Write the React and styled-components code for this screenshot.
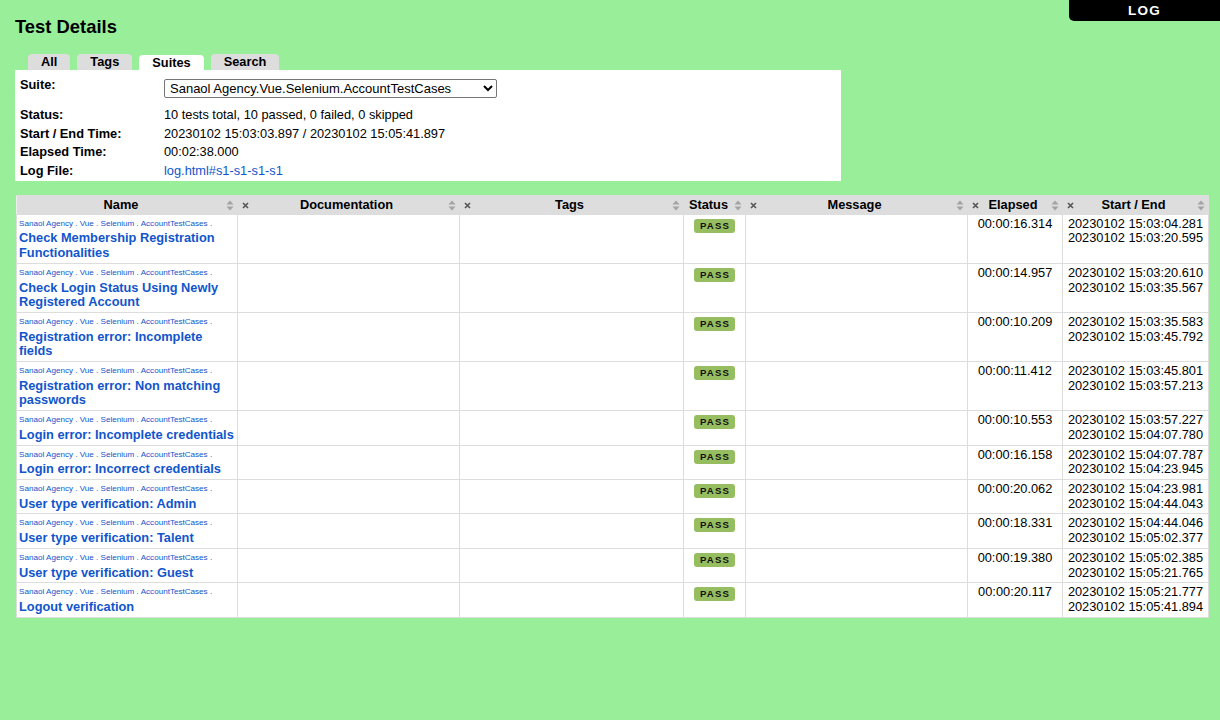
import React from "react";
import styled, { createGlobalStyle } from "styled-components";

const GlobalStyle = createGlobalStyle`
  body {
    margin: 0;
    background: #99ee99;
    font-family: "Liberation Sans", Arial, sans-serif;
    font-size: 12.8px;
    color: #000;
  }
`;

const Page = styled.div`
  position: relative;
  padding: 0 15px 40px;
  min-height: 680px;
`;

const LogLink = styled.a`
  position: absolute;
  top: 0;
  right: 0;
  width: 151px;
  height: 21px;
  line-height: 21px;
  background: #000;
  color: #fff;
  font-weight: bold;
  font-size: 13.5px;
  letter-spacing: 1.3px;
  text-align: center;
  text-decoration: none;
  border-bottom-left-radius: 5px;
`;

const Heading = styled.h1`
  margin: 0;
  padding-top: 16px;
  font-size: 18.4px;
  font-weight: bold;
  line-height: 21px;
`;

const Tabs = styled.ul`
  display: flex;
  gap: 7px;
  list-style: none;
  margin: 17px 0 0 13px;
  padding: 0;
`;

const Tab = styled.li`
  height: 16px;
  line-height: 16px;
  padding: 0 13px;
  margin-top: ${(p) => (p.$active ? "1px" : "0")};
  background: ${(p) => (p.$active ? "#fff" : "#ddd")};
  border-radius: 4px 4px 0 0;
  font-weight: bold;
  position: relative;
  z-index: 1;
`;

const DetailsBox = styled.div`
  width: 826px;
  box-sizing: border-box;
  background: #fff;
  padding: 4px 5px 1px;
  margin-top: ${(p) => p.$offset || 0};
`;

const DetailRow = styled.div`
  display: flex;
  align-items: flex-start;
  height: ${(p) => p.$height || "18.7px"};
  line-height: 15px;
`;

const Label = styled.div`
  width: 144px;
  flex: none;
  font-weight: bold;
  padding-top: ${(p) => p.$top || "2px"};
`;

const Value = styled.div`
  padding-top: 2px;
`;

const SuiteSelect = styled.select`
  margin-top: 5px;
  width: 333px;
  height: 19px;
  font-family: "Liberation Sans", Arial, sans-serif;
  font-size: 13px;
  padding: 0 1px;
  border: 1px solid #767676;
  border-radius: 2px;
  background: #fff;
  color: #000;
`;

const Link = styled.a`
  color: #15c;
  text-decoration: none;
`;

const Table = styled.table`
  margin: 14px 0 0 1px;
  width: 1192px;
  table-layout: fixed;
  border-collapse: collapse;
  background: #fff;
  font-size: 12.8px;
`;

const Th = styled.th`
  position: relative;
  height: 19px;
  box-sizing: border-box;
  background: #ddd;
  border: 1px solid #ddd;
  border-left-color: #eee;
  padding: ${(p) => (p.$hide ? "0 16px 0 12px" : "0 14px 0 2px")};
  font-weight: bold;
  text-align: center;
  white-space: nowrap;
`;

const Td = styled.td`
  border: 1px solid #ddd;
  padding: 2px 2px;
  vertical-align: top;
  line-height: 14.7px;
  text-align: ${(p) => p.$align || "left"};
`;

const ParentName = styled.span`
  display: block;
  color: #15c;
  font-size: 8.1px;
  line-height: 14.7px;
`;

const TestName = styled.a`
  display: block;
  color: #15c;
  font-weight: bold;
  text-decoration: none;
`;

const PassLabel = styled.span`
  display: inline-block;
  margin-top: 2px;
  padding: 2px 5px 2px 6px;
  background: #97bd61;
  border-radius: 3px;
  font-size: 9.6px;
  font-weight: bold;
  line-height: 10px;
  letter-spacing: 1.2px;
  color: #111;
`;

const SortIcon = styled.svg`
  position: absolute;
  right: 3px;
  top: 4px;
`;

const HideIcon = styled.svg`
  position: absolute;
  left: 4px;
  top: 6px;
`;

const Sort = () => (
  <SortIcon width="8" height="11" viewBox="0 0 8 11">
    <path d="M4 0.5 L7.5 4.5 H0.5 Z" fill="#a3a3a3" />
    <path d="M4 10.5 L7.5 6.5 H0.5 Z" fill="#a3a3a3" />
  </SortIcon>
);

const Hide = () => (
  <HideIcon width="7" height="7" viewBox="0 0 7 7">
    <path d="M1 1 L6 6 M6 1 L1 6" stroke="#555" strokeWidth="1.6" />
  </HideIcon>
);

const columns = [
  { title: "Name", width: 221 },
  { title: "Documentation", width: 222, hide: true },
  { title: "Tags", width: 224, hide: true },
  { title: "Status", width: 62 },
  { title: "Message", width: 222, hide: true },
  { title: "Elapsed", width: 95, hide: true },
  { title: "Start / End", width: 146, hide: true },
];

const tests = [
  ["Check Membership Registration Functionalities", "00:00:16.314", "20230102 15:03:04.281", "20230102 15:03:20.595"],
  ["Check Login Status Using Newly Registered Account", "00:00:14.957", "20230102 15:03:20.610", "20230102 15:03:35.567"],
  ["Registration error: Incomplete fields", "00:00:10.209", "20230102 15:03:35.583", "20230102 15:03:45.792"],
  ["Registration error: Non matching passwords", "00:00:11.412", "20230102 15:03:45.801", "20230102 15:03:57.213"],
  ["Login error: Incomplete credentials", "00:00:10.553", "20230102 15:03:57.227", "20230102 15:04:07.780"],
  ["Login error: Incorrect credentials", "00:00:16.158", "20230102 15:04:07.787", "20230102 15:04:23.945"],
  ["User type verification: Admin", "00:00:20.062", "20230102 15:04:23.981", "20230102 15:04:44.043"],
  ["User type verification: Talent", "00:00:18.331", "20230102 15:04:44.046", "20230102 15:05:02.377"],
  ["User type verification: Guest", "00:00:19.380", "20230102 15:05:02.385", "20230102 15:05:21.765"],
  ["Logout verification", "00:00:20.117", "20230102 15:05:21.777", "20230102 15:05:41.894"],
];

export default function App() {
  return (
    <Page>
      <GlobalStyle />
      <LogLink href="#log">LOG</LogLink>
      <Heading>Test Details</Heading>
      <Tabs>
        <Tab>All</Tab>
        <Tab>Tags</Tab>
        <Tab $active>Suites</Tab>
        <Tab>Search</Tab>
      </Tabs>
      <DetailsBox $offset="-1px">
        <DetailRow $height="31px">
          <Label $top="3px">Suite:</Label>
          <SuiteSelect defaultValue="s1">
            <option value="s1">Sanaol Agency.Vue.Selenium.AccountTestCases</option>
          </SuiteSelect>
        </DetailRow>
        <DetailRow>
          <Label>Status:</Label>
          <Value>10 tests total, 10 passed, 0 failed, 0 skipped</Value>
        </DetailRow>
        <DetailRow>
          <Label>Start / End Time:</Label>
          <Value>20230102 15:03:03.897 / 20230102 15:05:41.897</Value>
        </DetailRow>
        <DetailRow>
          <Label>Elapsed Time:</Label>
          <Value>00:02:38.000</Value>
        </DetailRow>
        <DetailRow>
          <Label>Log File:</Label>
          <Value>
            <Link href="#s1-s1-s1-s1">log.html#s1-s1-s1-s1</Link>
          </Value>
        </DetailRow>
      </DetailsBox>
      <Table>
        <colgroup>
          {columns.map((c) => (
            <col key={c.title} style={{ width: c.width }} />
          ))}
        </colgroup>
        <thead>
          <tr>
            {columns.map((c) => (
              <Th key={c.title} $hide={c.hide}>
                {c.hide && <Hide />}
                {c.title}
                <Sort />
              </Th>
            ))}
          </tr>
        </thead>
        <tbody>
          {tests.map(([name, elapsed, start, end]) => (
            <tr key={name}>
              <Td>
                <ParentName>Sanaol Agency . Vue . Selenium . AccountTestCases .</ParentName>
                <TestName href="#test">{name}</TestName>
              </Td>
              <Td />
              <Td />
              <Td $align="center">
                <PassLabel>PASS</PassLabel>
              </Td>
              <Td />
              <Td $align="center">{elapsed}</Td>
              <Td $align="center">
                {start}
                <br />
                {end}
              </Td>
            </tr>
          ))}
        </tbody>
      </Table>
    </Page>
  );
}
